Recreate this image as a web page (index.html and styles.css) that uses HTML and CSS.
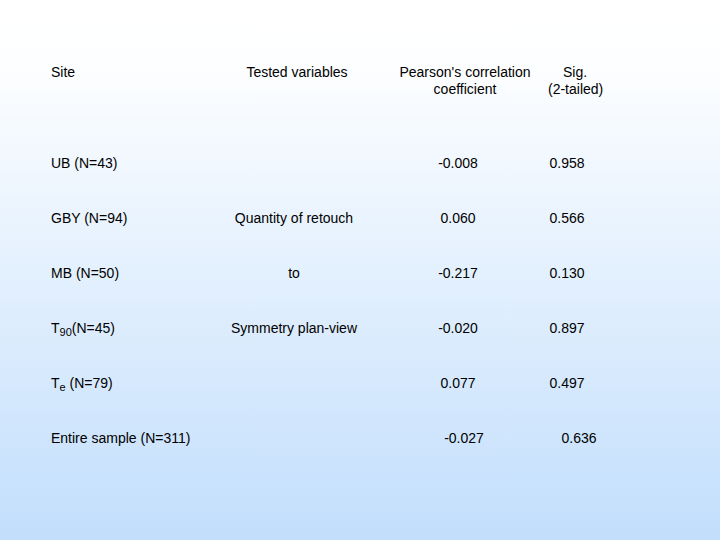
FILE: index.html
```html
<!DOCTYPE html>
<html>
<head>
<meta charset="utf-8">
<link rel="stylesheet" href="styles.css">
</head>
<body>
<div class="slide">
  <div class="table">
    <div class="row head">
      <div class="c site">Site</div>
      <div class="c var">Tested variables</div>
      <div class="c pear">Pearson's correlation<br>coefficient</div>
      <div class="c sig">Sig.<br>(2-tailed)</div>
    </div>
    <div class="row first">
      <div class="c site">UB (N=43)</div>
      <div class="c var"></div>
      <div class="c pear">-0.008</div>
      <div class="c sig">0.958</div>
    </div>
    <div class="row">
      <div class="c site">GBY (N=94)</div>
      <div class="c var">Quantity of retouch</div>
      <div class="c pear">0.060</div>
      <div class="c sig">0.566</div>
    </div>
    <div class="row">
      <div class="c site">MB (N=50)</div>
      <div class="c var">to</div>
      <div class="c pear">-0.217</div>
      <div class="c sig">0.130</div>
    </div>
    <div class="row">
      <div class="c site">T<sub>90</sub>(N=45)</div>
      <div class="c var">Symmetry plan-view</div>
      <div class="c pear">-0.020</div>
      <div class="c sig">0.897</div>
    </div>
    <div class="row">
      <div class="c site">T<sub>e</sub> (N=79)</div>
      <div class="c var"></div>
      <div class="c pear">0.077</div>
      <div class="c sig">0.497</div>
    </div>
    <div class="row last">
      <div class="c site">Entire sample (N=311)</div>
      <div class="c var"></div>
      <div class="c pear">-0.027</div>
      <div class="c sig">0.636</div>
    </div>
  </div>
</div>
</body>
</html>
```
FILE: styles.css
```css
html, body {
  margin: 0;
  padding: 0;
}
body {
  width: 720px;
  height: 540px;
  overflow: hidden;
}
.slide {
  width: 720px;
  height: 540px;
  background: linear-gradient(to bottom, #ffffff 0%, #fdfeff 12%, #c2defc 100%);
  font-family: "Liberation Sans", Arial, sans-serif;
  font-size: 14px;
  color: #000;
  padding-top: 64px;
  box-sizing: border-box;
}
.table {
  padding-left: 51px;
}
.row {
  display: grid;
  grid-template-columns: 173px 140px 168px 70px;
  height: 55px;
  align-items: center;
  line-height: 17px;
}
.row.head {
  height: 34px;
  align-items: start;
}
.row.first {
  margin-top: 38px;
}
.c {
  white-space: nowrap;
}
.site {
  text-align: left;
}
.var {
  text-align: center;
}
.pear {
  text-align: center;
  padding-left: 20px;
}
.sig {
  text-align: center;
}
.head .var {
  padding-left: 6px;
}
.head .pear {
  padding-left: 34px;
}
.head .sig {
  padding-left: 16px;
}
.last .pear {
  padding-left: 32px;
}
.last .sig {
  padding-left: 24px;
}
sub {
  font-size: 11px;
  line-height: 0;
  vertical-align: -3px;
}
```
